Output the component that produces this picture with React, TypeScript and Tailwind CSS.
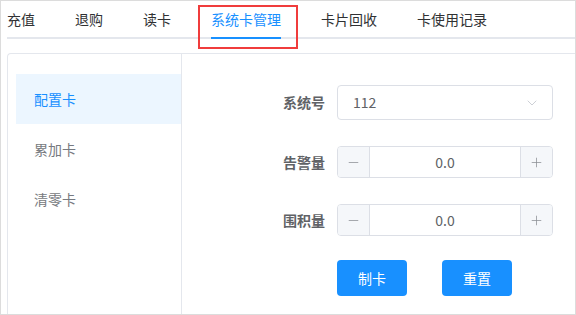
import { ChevronDown, Minus, Plus } from "lucide-react";

const tabs = ["充值", "退购", "读卡", "系统卡管理", "卡片回收", "卡使用记录"];
const menu = ["配置卡", "累加卡", "清零卡"];

const NumberBox = ({ value }: { value: string }) => (
  <div className="flex w-[216px] h-[32px] border border-[#dcdfe6] rounded-[4px] overflow-hidden">
    <div className="w-[32px] flex items-center justify-center bg-[#f5f7fa] border-r border-[#dcdfe6]">
      <Minus size={15} strokeWidth={1.2} color="#8a8d93" />
    </div>
    <div className="flex-1 flex items-center justify-center text-[14px] text-[#606266]">{value}</div>
    <div className="w-[32px] flex items-center justify-center bg-[#f5f7fa] border-l border-[#dcdfe6]">
      <Plus size={15} strokeWidth={1.2} color="#8a8d93" />
    </div>
  </div>
);

const Row = ({ label, children }: { label: string; children: React.ReactNode }) => (
  <div className="flex items-center">
    <div className="w-[112px] shrink-0 pr-[12px] text-right text-[14px] font-semibold text-[#606266]">{label}</div>
    {children}
  </div>
);

const App = () => {
  return (
    <div
      className="relative w-[576px] h-[315px] overflow-hidden bg-white border border-[#dcdcdc] pl-[6px] flex flex-col"
      style={{ fontFamily: '"Noto Sans CJK SC", "Noto Sans", sans-serif' }}
    >
      <div className="flex h-[38px] border-b-2 border-[#e4e7ed] shrink-0">
        {tabs.map((t, i) => (
          <div key={t} className={`h-[38px] -mb-[2px] flex ${i === 0 ? "pr-[20px]" : "px-[20px]"}`}>
            <span
              className={`h-full flex items-center text-[14px] border-b-2 ${
                i === 3 ? "text-[#1890ff] border-[#1890ff]" : "text-[#303133] border-transparent"
              }`}
            >
              {t}
            </span>
          </div>
        ))}
      </div>

      <div className="mt-[14px] flex-1 flex border border-r-0 border-b-0 border-[#e4e7ed] rounded-tl-[4px]">
        <div className="w-[174px] shrink-0 border-r border-[#e4e7ed] pl-[8px] pt-[20px]">
          {menu.map((m, i) => (
            <div
              key={m}
              className={`h-[50px] flex items-center pl-[18px] text-[14px] ${
                i === 0 ? "bg-[#ecf6ff] text-[#1890ff]" : "text-[#777a80]"
              }`}
            >
              {m}
            </div>
          ))}
        </div>

        <div className="flex-1 pl-[43px] pt-[31px] flex flex-col">
          <Row label="系统号">
            <div className="w-[216px] h-[35px] border border-[#dcdfe6] rounded-[4px] flex items-center justify-between pl-[15px] pr-[12px]">
              <span className="text-[14px] text-[#606266]">112</span>
              <ChevronDown size={16} strokeWidth={1.2} color="#c0c4cc" />
            </div>
          </Row>
          <div className="mt-[26px]">
            <Row label="告警量">
              <NumberBox value="0.0" />
            </Row>
          </div>
          <div className="mt-[26px]">
            <Row label="围积量">
              <NumberBox value="0.0" />
            </Row>
          </div>
          <div className="mt-[24px] flex pl-[112px] gap-[35px]">
            <button className="w-[70px] h-[36px] rounded-[4px] bg-[#1890ff] text-white text-[14px]">制卡</button>
            <button className="w-[70px] h-[36px] rounded-[4px] bg-[#1890ff] text-white text-[14px]">重置</button>
          </div>
        </div>
      </div>

      <div className="absolute left-[197px] top-[4px] w-[100px] h-[44px] border-2 border-[#f03c3c]" />
    </div>
  );
};

export default App;
